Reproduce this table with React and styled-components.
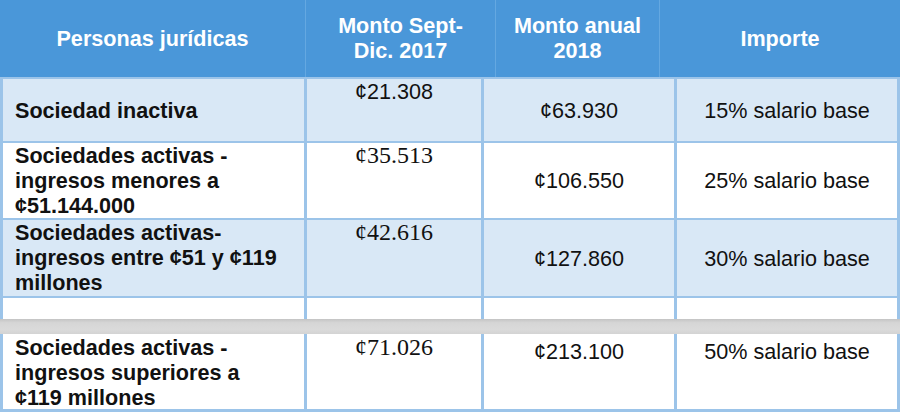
import React from 'react';
import styled, { createGlobalStyle } from 'styled-components';

const Global = createGlobalStyle`
  html, body {
    margin: 0;
    padding: 0;
    background: #fff;
  }
`;

const LINE = '#9cc4e9';

const Table = styled.div`
  width: 900px;
  height: 412px;
  display: flex;
  flex-direction: column;
  font-family: 'Liberation Sans', Arial, sans-serif;
  font-size: 21.6px;
  color: #111;
  overflow: hidden;
`;

const Header = styled.div`
  display: grid;
  grid-template-columns: 305px 190px 164px 241px;
  height: 77px;
  background: #4a97d9;
`;

const HeaderCell = styled.div`
  display: flex;
  align-items: center;
  justify-content: center;
  text-align: center;
  color: #fff;
  font-weight: bold;
  line-height: 25px;
  padding-bottom: 1px;
  border-left: ${({ $first }) => ($first ? 'none' : '1px solid #64a8e1')};
`;

const Row = styled.div`
  display: grid;
  grid-template-columns: 301px 174px 190px 220px;
  column-gap: 3px;
  padding: 0 3px;
  height: ${({ $h }) => $h}px;
  background: ${LINE};
  border-top: ${({ $top }) => $top}px solid ${LINE};
  border-bottom: ${({ $bottom }) => $bottom || 0}px solid ${LINE};
`;

const Cell = styled.div`
  display: flex;
  flex-direction: column;
  align-items: ${({ $left }) => ($left ? 'flex-start' : 'center')};
  justify-content: ${({ $middle }) => ($middle ? 'center' : 'flex-start')};
  padding: ${({ $pt }) => $pt || 0}px 0 0 ${({ $left }) => ($left ? 12 : 0)}px;
  background: ${({ $shade }) => ($shade ? '#d9e8f6' : '#fff')};
  line-height: 25px;
  white-space: nowrap;
  overflow: hidden;
  font-weight: ${({ $bold }) => ($bold ? 'bold' : 'normal')};
`;

const Serif = styled.span`
  font-family: 'Liberation Serif', 'Times New Roman', serif;
  font-size: 24px;
`;

const GrayBar = styled.div`
  height: 15px;
  background: linear-gradient(#c4c4c4 0%, #d6d6d6 25%, #dadada 70%, #d3d3d3 100%);
`;

const rows = [
  {
    h: 62,
    top: 2,
    shade: true,
    name: ['Sociedad inactiva'],
    nameMiddle: true,
    sept: '¢21.308',
    annual: '¢63.930',
    pct: '15% salario base',
  },
  {
    h: 75,
    top: 2,
    name: ['Sociedades activas -', 'ingresos menores a', '¢51.144.000'],
    sept: '¢35.513',
    serif: true,
    annual: '¢106.550',
    pct: '25% salario base',
  },
  {
    h: 76,
    top: 2,
    shade: true,
    name: ['Sociedades activas-', 'ingresos entre ¢51 y ¢119', 'millones'],
    sept: '¢42.616',
    serif: true,
    annual: '¢127.860',
    pct: '30% salario base',
  },
];

const App = () => {
  return (
    <>
      <Global />
      <Table>
        <Header>
          <HeaderCell $first>Personas jurídicas</HeaderCell>
          <HeaderCell>
            Monto Sept-
            <br />
            Dic. 2017
          </HeaderCell>
          <HeaderCell>
            Monto anual
            <br />
            2018
          </HeaderCell>
          <HeaderCell>Importe</HeaderCell>
        </Header>

        {rows.map(r => (
          <Row key={r.sept} $h={r.h} $top={r.top}>
            <Cell $left $bold $shade={r.shade} $middle={r.nameMiddle}>
              {r.name.map(line => (
                <div key={line}>{line}</div>
              ))}
            </Cell>
            <Cell $shade={r.shade}>
              {r.serif ? <Serif>{r.sept}</Serif> : r.sept}
            </Cell>
            <Cell $shade={r.shade} $middle>
              {r.annual}
            </Cell>
            <Cell $shade={r.shade} $middle>
              {r.pct}
            </Cell>
          </Row>
        ))}

        <Row $h={21} $top={2}>
          <Cell />
          <Cell />
          <Cell />
          <Cell />
        </Row>
        <GrayBar />
        <Row $h={75} $top={0} $bottom={3}>
          <Cell $left $bold $pt={1}>
            <div>Sociedades activas -</div>
            <div>ingresos superiores a</div>
            <div>¢119 millones</div>
          </Cell>
          <Cell $pt={1}>
            <Serif>¢71.026</Serif>
          </Cell>
          <Cell $pt={5}>¢213.100</Cell>
          <Cell $pt={5}>50% salario base</Cell>
        </Row>
      </Table>
    </>
  );
};

export default App;
